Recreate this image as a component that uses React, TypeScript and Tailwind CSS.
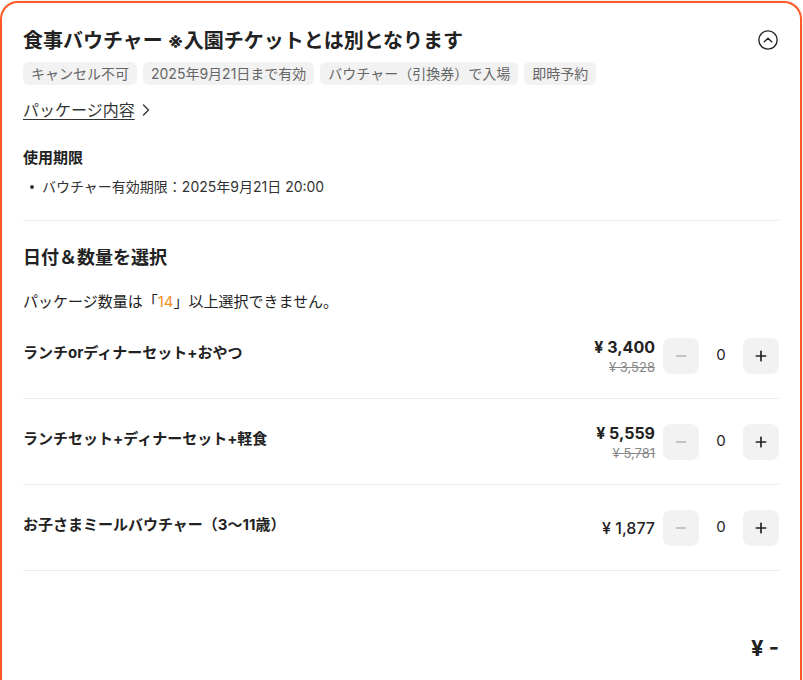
import React from "react";
import { CircleChevronUp, ChevronRight, Minus, Plus } from "lucide-react";

const font = { fontFamily: '"Inter", "Noto Sans CJK JP", sans-serif' };

const tags = ["キャンセル不可", "2025年9月21日まで有効", "バウチャー（引換券）で入場", "即時予約"];

const items = [
  { name: "ランチorディナーセット+おやつ", price: "¥ 3,400", was: "¥ 3,528" },
  { name: "ランチセット+ディナーセット+軽食", price: "¥ 5,559", was: "¥ 5,781" },
  { name: "お子さまミールバウチャー（3〜11歳）", price: "¥ 1,877", was: "" },
];

function Row({ name, price, was }: { name: string; price: string; was: string }) {
  return (
    <div className="flex h-[86px] items-center justify-between border-b border-[#ebebeb]">
      <div className="text-[15px] font-bold text-[#222] -mt-[4px]">{name}</div>
      <div className="flex items-center">
        <div className="flex flex-col items-end mr-2">
          {was ? (
            <>
              <span className="text-[16px] font-bold leading-[22px] text-[#222]">{price}</span>
              <span className="text-[13px] leading-[18px] text-[#888] line-through">{was}</span>
            </>
          ) : (
            <span className="text-[16px] font-medium text-[#222]">{price}</span>
          )}
        </div>
        <button className="flex h-9 w-9 items-center justify-center rounded-lg bg-[#f2f2f2] text-[#b5b5b5]">
          <Minus size={16} strokeWidth={2} />
        </button>
        <span className="w-11 text-center text-[15px] text-[#222]">0</span>
        <button className="flex h-9 w-9 items-center justify-center rounded-lg bg-[#f2f2f2] text-[#222]">
          <Plus size={16} strokeWidth={2.5} />
        </button>
      </div>
    </div>
  );
}

export default function App() {
  return (
    <div className="min-h-[680px] bg-white pt-px pr-px" style={font}>
      <div className="rounded-t-[18px] border-2 border-b-0 border-[#ff5a24] bg-white px-[21px] pt-[23px] pb-[20px] shadow-[0_-1px_3px_rgba(0,0,0,0.08)]">
        <div className="flex items-start justify-between">
          <h1 className="text-[20px] font-bold leading-[30px] text-[#222]">
            食事バウチャー ※入園チケットとは別となります
          </h1>
          <CircleChevronUp size={22} strokeWidth={1.5} className="mt-[3px] text-[#222]" />
        </div>

        <div className="mt-[6px] flex gap-[6px]">
          {tags.map((t) => (
            <span key={t} className="rounded-md bg-[#f2f2f2] px-2 text-[14px] leading-[23px] text-[#666]">
              {t}
            </span>
          ))}
        </div>

        <div className="mt-[13px] flex items-center text-[16px] leading-[24px] text-[#333]">
          <span className="underline underline-offset-[3px]">パッケージ内容</span>
          <ChevronRight size={20} strokeWidth={1.6} className="ml-px" />
        </div>

        <div className="mt-[25px] text-[15px] font-bold leading-[22px] text-[#222]">使用期限</div>
        <div className="mt-[8px] flex items-center text-[14px] leading-[20px] text-[#333]">
          <span className="ml-[7px] mr-[8px] h-[4px] w-[4px] rounded-full bg-[#333]" />
          バウチャー有効期限：2025年9月21日 20:00
        </div>

        <div className="mt-[23px] border-t border-[#ebebeb]" />

        <h2 className="mt-[24px] text-[18px] font-bold leading-[26px] text-[#222]">日付＆数量を選択</h2>
        <p className="mt-[20px] text-[15px] leading-[22px] text-[#222]">
          パッケージ数量は「<span className="text-[#f0902a]">14</span>」以上選択できません。
        </p>

        <div>
          {items.map((it) => (
            <Row key={it.name} {...it} />
          ))}
        </div>

        <div className="mt-[63px] text-right text-[22px] font-bold leading-[28px] text-[#222]">¥ -</div>
      </div>
    </div>
  );
}
